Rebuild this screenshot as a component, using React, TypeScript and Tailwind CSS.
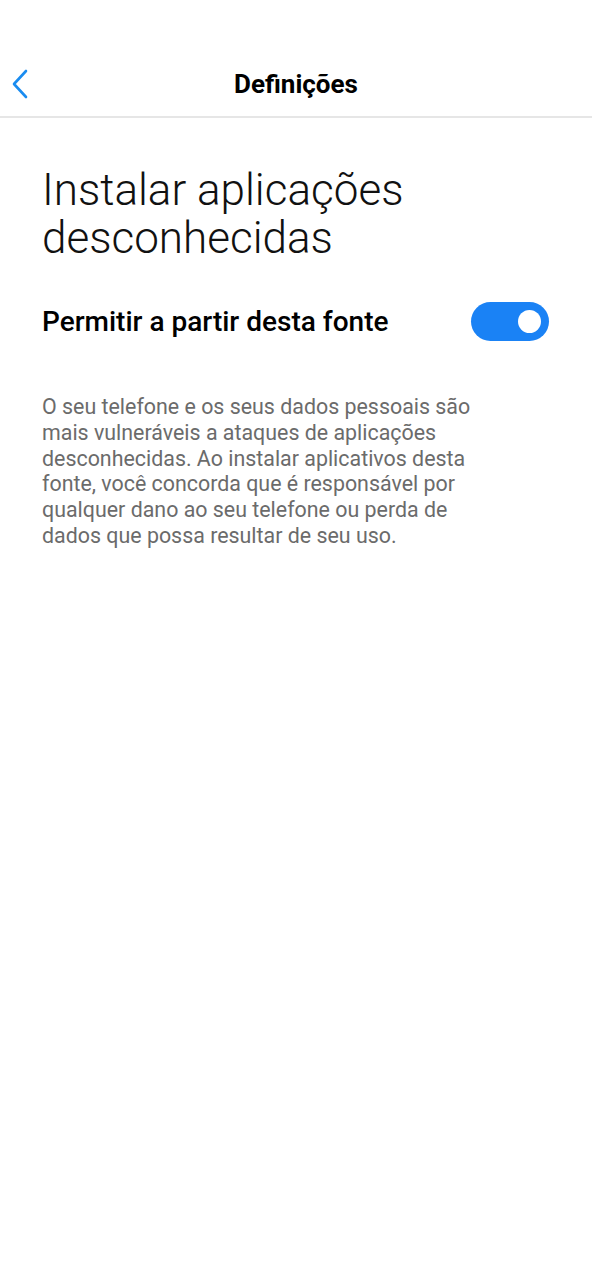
export default function App() {
  return (
    <div className="w-[592px] h-[1280px] bg-white" style={{ fontFamily: "Roboto, 'Noto Sans', sans-serif" }}>
      <header className="relative flex items-center justify-center h-[118px] pt-[51px] border-b-2 border-[#e6e6e6]">
        <button className="absolute left-[8px] top-[67px] w-[24px] h-[34px] flex items-center justify-center">
          <svg width="20" height="30" viewBox="0 0 20 30" fill="none">
            <path d="M16 2 L4 15 L16 28" stroke="#1a8cf0" strokeWidth="2.6" strokeLinecap="round" strokeLinejoin="round" />
          </svg>
        </button>
        <h1 className="text-[26px] font-bold text-black leading-none">Definições</h1>
      </header>

      <main className="pl-[42px] pr-[43px]">
        <h2 className="mt-[48px] text-[44px] leading-[48px] font-light text-[#111]">
          Instalar aplicações desconhecidas
        </h2>

        <div className="mt-[40px] flex items-center justify-between">
          <span className="text-[28px] font-medium text-black leading-none">Permitir a partir desta fonte</span>
          <div className="w-[78px] h-[39px] rounded-full bg-[#1a82f5] flex items-center justify-end pr-[8px]">
            <div className="w-[23px] h-[23px] rounded-full bg-white" />
          </div>
        </div>

        <p className="mt-[53px] w-[460px] text-[21.4px] leading-[25.8px] text-[#6b6b6b]">
          O seu telefone e os seus dados pessoais são mais vulneráveis a ataques de aplicações desconhecidas. Ao
          instalar aplicativos desta fonte, você concorda que é responsável por qualquer dano ao seu telefone ou perda
          de dados que possa resultar de seu uso.
        </p>
      </main>
    </div>
  );
}
